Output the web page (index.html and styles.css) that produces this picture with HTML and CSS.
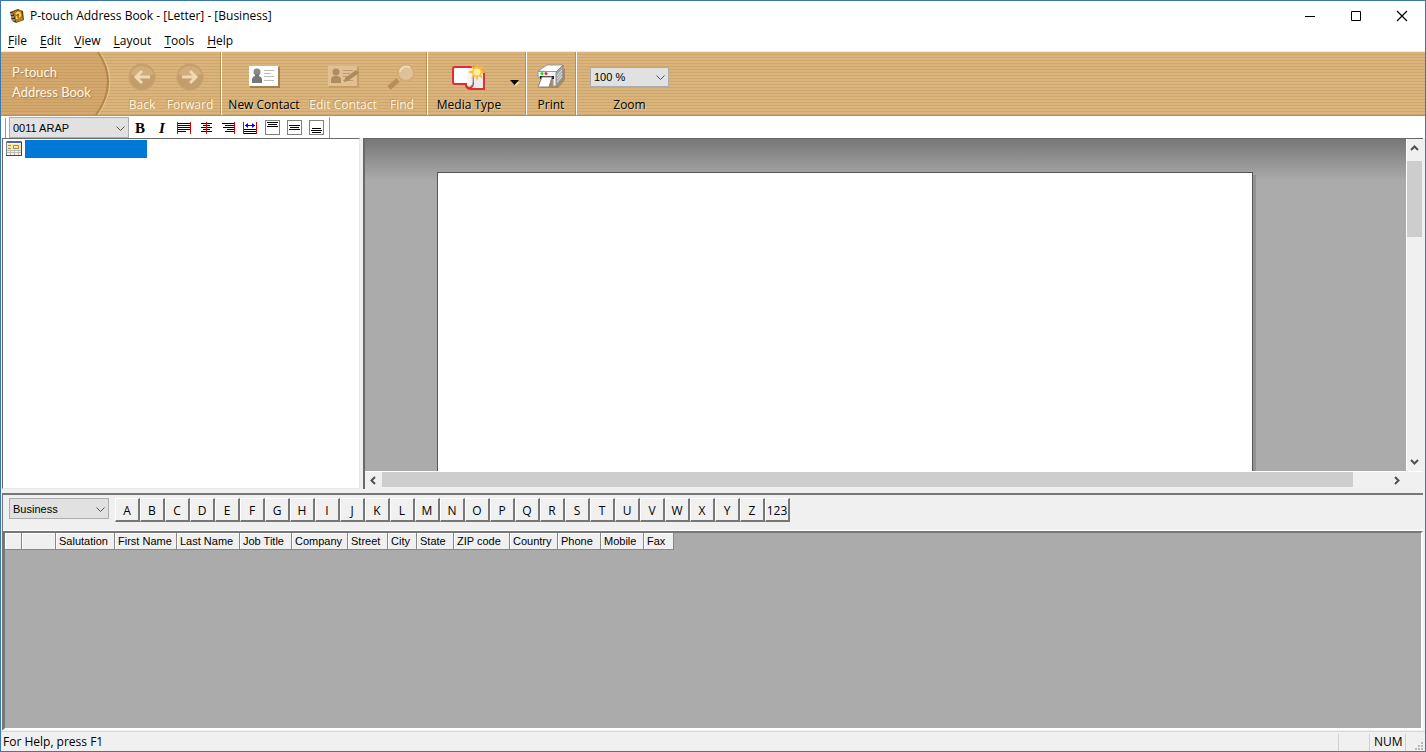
FILE: index.html
```
<!DOCTYPE html>
<html lang="en">
<head>
<meta charset="utf-8">
<title>P-touch Address Book - [Letter] - [Business]</title>
<link rel="stylesheet" href="styles.css">
</head>
<body>
<div class="window">
  <header class="titlebar">
    <svg class="app-icon" width="16" height="16" viewBox="0 0 16 16"><path d="M1 4 9 1l5 2 1 9-8 3-4-2z" fill="#6b4516"/><path d="m4 4 8-2 2 10-7 2z" fill="#b8801f"/><path d="m1 4 3 1 3 9-4-2z" fill="#3d2b16"/><path d="M1 6h3M2 9h3M3 12h3" stroke="#ddd"/><path d="M7 6q3-3 4 0t-3 3v2" fill="none" stroke="#f7d44c" stroke-width="2"/><path d="M9 6v4" stroke="#5c3a12"/></svg>
    <h1 class="title">P-touch Address Book - [Letter] - [Business]</h1>
    <div class="window-buttons">
      <button class="window-button" aria-label="Minimize"><svg width="12" height="12"><path d="M1 6.500h10" stroke="#000"/></svg></button>
      <button class="window-button" aria-label="Maximize"><svg width="12" height="12"><path d="M1.500 1.500h9v9h-9z" fill="none" stroke="#000"/></svg></button>
      <button class="window-button" aria-label="Close"><svg width="12" height="12"><path d="m1 1 10 10M11 1 1 11" stroke="#000" stroke-width="1.200"/></svg></button>
    </div>
  </header>
  <nav class="menubar">
    <button class="menu"><u>F</u>ile</button>
    <button class="menu"><u>E</u>dit</button>
    <button class="menu"><u>V</u>iew</button>
    <button class="menu"><u>L</u>ayout</button>
    <button class="menu"><u>T</u>ools</button>
    <button class="menu"><u>H</u>elp</button>
  </nav>
  <div class="toolbar">
    <div class="brand">
      <svg class="brand-arc" width="110" height="63" viewBox="0 0 110 63"><path d="M0 0h97q21 31-2 63H0z" fill="#c18a48" fill-opacity=".28"/><path d="M97 0q21 31-2 63" fill="none" stroke="#a87838" stroke-width="2" opacity=".7"/><path d="M99 0q21 31-2 63" fill="none" stroke="#ecd0a0" opacity=".7"/></svg>
      <span class="brand-text">P-touch<br>Address Book</span>
    </div>
    <div class="group group-nav">
      <button class="tool tool-nav" disabled><svg width="28" height="28"><circle cx="14" cy="14" r="13" fill="#c39d6a" stroke="#c7a26e"/><path d="M2 11a13 13 0 0 1 24 0q-12 5-24 0z" fill="#d7b484" opacity=".7"/><path d="M22 14H8m6-6-6 6 6 6" fill="none" stroke="#f0d8b1" stroke-width="3"/></svg><span>Back</span></button>
      <button class="tool tool-nav" disabled><svg width="28" height="28"><circle cx="14" cy="14" r="13" fill="#c39d6a" stroke="#c7a26e"/><path d="M2 11a13 13 0 0 1 24 0q-12 5-24 0z" fill="#d7b484" opacity=".7"/><path d="M6 14h14m-6-6 6 6-6 6" fill="none" stroke="#f0d8b1" stroke-width="3"/></svg><span>Forward</span></button>
    </div>
    <div class="group group-contact">
      <button class="tool tool-new"><svg width="32" height="28"><path d="M2 4h30v21H2z" fill="#876238" opacity=".6"/><path d="M1 3h29v20H1z" fill="#fff"/><path d="M4 20v-4q1-3 3-3h3q3 0 4 3v4z" fill="#777"/><circle cx="9" cy="9" r="3.500" fill="#888"/><path d="M7 11h4v3H7z" fill="#777"/><path d="M16 7.500h10M16 10.500h7M16 13.500h10M16 17.500h10" stroke="#bbb"/></svg><span>New Contact</span></button>
      <button class="tool tool-edit" disabled><svg width="32" height="28"><path d="M2 4h30v21H2z" fill="#c79d64"/><path d="M1 3h29v20H1z" fill="#e1c193"/><path d="M4 20v-4q1-3 3-3h3q3 0 4 3v4z" fill="#b08c60"/><circle cx="9" cy="9" r="3.500" fill="#b08c60"/><path d="M16 7.500h10M16 10.500h7M16 13.500h10M16 17.500h10" stroke="#c09b6b"/><path d="m17 19 1-4 11-8 3 3-11 8z" fill="#b08a5c"/></svg><span>Edit Contact</span></button>
      <button class="tool tool-find" disabled><svg width="28" height="28"><path d="m1 25 9-8" stroke="#b98c5c" stroke-width="5"/><circle cx="18" cy="10" r="8" fill="#dfc29a" stroke="#d2ac76" stroke-width="2"/><path d="M12 9a6 6 0 0 1 10-4" fill="none" stroke="#edd8b8" stroke-width="2"/></svg><span>Find</span></button>
    </div>
    <div class="group group-media">
      <button class="tool tool-media"><svg width="36" height="28"><path d="M19 9h14v17H20q-4 0-5-3z" fill="#f1eaea" stroke="#d83338" stroke-width="2"/><path d="M4 4h18v17q-1 4-4 4-3-1-3-4H4q-2 0-2-2V6q0-2 2-2z" fill="#fff" stroke="#e02c33" stroke-width="2"/><path d="M16 21q1 4 4 2 3-2 2-12v-6h-5z" fill="#f6f2f2"/><path d="M22 12v8q-1 4-4 4" fill="none" stroke="#999"/><path d="m26 0 1.500 5L32 2l-2 5 5 2-5 2 2 5-4.500-3L26 18l-1.500-5-4.500 3 2-5-5-2 5-2-2-5 4.500 3z" fill="#ffbb35"/><circle cx="26" cy="9" r="3.500" fill="#fff296"/></svg><span>Media Type</span></button>
      <button class="drop" aria-label="Media type options"><svg width="10" height="6"><path d="M2 2h8L6 6z" fill="#f2dcb8"/><path d="M0 0h9L4.500 5z"/></svg></button>
    </div>
    <div class="group group-print">
      <button class="tool tool-print"><svg width="30" height="28"><path d="m4 25 18 0 7-8V5z" fill="#6f5430" opacity=".4"/><path d="m2 8 9-6h16l-6 7z" fill="#fff" stroke="#999"/><path d="m20 9 7-7v13l-7 9z" fill="#a5a5a5" stroke="#888"/><path d="m21 13 5-6m-5 9 5-6m-5 9 5-6" stroke="#e8e8e8"/><path d="M2 8.500h18V23h-3v-9H2z" fill="#f4f4f4" stroke="#999"/><path d="M4 13h14v3H4z" fill="#222"/><path d="M6 14h10l-3 10H2z" fill="#fff" stroke="#888"/><circle cx="6" cy="10.500" r="1.500" fill="#17d636"/><circle cx="10" cy="10.500" r="1.500" fill="#e52936"/></svg><span>Print</span></button>
    </div>
    <div class="zoom">
      <div class="combo combo-zoom"><select id="zoom"><option>100 %</option></select><svg class="chevron" width="9" height="6"><path d="m.5.500 4 4 4-4" fill="none" stroke="#555"/></svg></div>
      <label for="zoom">Zoom</label>
    </div>
  </div>
  <div class="formatbar">
    <span class="grip"></span>
    <div class="combo combo-font"><select aria-label="Font"><option>0011 ARAP</option></select><svg class="chevron" width="9" height="6"><path d="m.5.500 4 4 4-4" fill="none" stroke="#555"/></svg></div>
    <button class="format bold" aria-label="Bold">B</button>
    <button class="format italic" aria-label="Italic">I</button>
    <button class="format" aria-label="Align left"><svg width="14" height="14"><path d="M1 2.500h12M1 4.500h12M1 6.500h12M1 8.500h12M1 10.500h8" stroke="#000"/><path d="M.5 1v12M13.500 1v12" stroke="#d00000"/></svg></button>
    <button class="format" aria-label="Align center"><svg width="14" height="14"><path d="M2 2.500h11M4 4.500h7M2 6.500h11M4 8.500h7M2 10.500h11" stroke="#000"/><path d="M7.500 1v12" stroke="#d00000"/></svg></button>
    <button class="format" aria-label="Align right"><svg width="14" height="14"><path d="M1 2.500h12M4 4.500h9M2 6.500h11M6 8.500h7M4 10.500h9" stroke="#000"/><path d="M13.500 1v12" stroke="#d00000"/></svg></button>
    <button class="format" aria-label="Justify"><svg width="14" height="14"><path d="M1 8.500h12M1 10.500h12M1 12.500h12" stroke="#000"/><path d="M.5 1v12M13.500 1v12" stroke="#d00000"/><path d="M2 4.500h10" stroke="#00e"/><path d="m5 2-3 2.500L5 7zm4 0 3 2.500L9 7z" fill="#00e"/></svg></button>
    <button class="format" aria-label="Align top"><svg width="15" height="15"><path d="M.5.500h14v14H.5z" fill="none" stroke="#000" stroke-dasharray="1 1"/><path d="M2 2.500h11M3 4.500h9M2 6.500h11" stroke="#000"/></svg></button>
    <button class="format" aria-label="Align middle"><svg width="15" height="15"><path d="M.5.500h14v14H.5z" fill="none" stroke="#000" stroke-dasharray="1 1"/><path d="M2 5.500h11M3 7.500h9M2 9.500h11" stroke="#000"/></svg></button>
    <button class="format" aria-label="Align bottom"><svg width="15" height="15"><path d="M.5.500h14v14H.5z" fill="none" stroke="#000" stroke-dasharray="1 1"/><path d="M3 8.500h9M2 10.500h11M3 12.500h9" stroke="#000"/></svg></button>
    <span class="bar-end"></span>
  </div>
  <main class="panes">
    <section class="tree" aria-label="Layouts">
      <svg width="16" height="16"><path d="M.5 1.500h15v14H.5z" fill="#f4f4ee" stroke="#888"/><path d="M1 1h14v2H1z" fill="#4a66a8"/><path d="M1 4h14v6H1z" fill="#f5e9ab"/><path d="M2 5.500h3M2 8.500h3M7.500 5.500h5v3h-5z" fill="none" stroke="#a58b48"/><path d="M1 10.500h14M1 12.500h14M4.500 10v5M8.500 10v5M12.500 10v5" stroke="#bbb"/><path d="M0 15.500h16M15.500 2v14" stroke="#444"/></svg>
      <span class="tree-selection"></span>
    </section>
    <section class="preview" aria-label="Label preview">
      <div class="canvas"><div class="paper"></div></div>
      <div class="scroll-v">
        <button class="scroll-button" aria-label="Scroll up"><svg width="9" height="7"><path d="m1 5 3.500-3.500L8 5" fill="none" stroke="#505050" stroke-width="2"/></svg></button>
        <div class="track-v"><div class="thumb-v"></div></div>
        <button class="scroll-button" aria-label="Scroll down"><svg width="9" height="7"><path d="m1 1 3.500 3.500L8 1" fill="none" stroke="#505050" stroke-width="2"/></svg></button>
      </div>
      <div class="scroll-h">
        <button class="scroll-button" aria-label="Scroll left"><svg width="7" height="9"><path d="M5 1 1.500 4.500 5 8" fill="none" stroke="#505050" stroke-width="2"/></svg></button>
        <div class="track-h"><div class="thumb-h"></div></div>
        <button class="scroll-button" aria-label="Scroll right"><svg width="7" height="9"><path d="m1 1 3.500 3.500L1 8" fill="none" stroke="#505050" stroke-width="2"/></svg></button>
      </div>
    </section>
  </main>
  <section class="contacts">
    <div class="filter">
      <div class="combo combo-book"><select aria-label="Address book"><option>Business</option></select><svg class="chevron" width="9" height="6"><path d="m.5.500 4 4 4-4" fill="none" stroke="#555"/></svg></div>
      <div class="letters">
        <button>A</button><button>B</button><button>C</button><button>D</button><button>E</button><button>F</button><button>G</button><button>H</button><button>I</button><button>J</button><button>K</button><button>L</button><button>M</button><button>N</button><button>O</button><button>P</button><button>Q</button><button>R</button><button>S</button><button>T</button><button>U</button><button>V</button><button>W</button><button>X</button><button>Y</button><button>Z</button><button>123</button>
      </div>
    </div>
    <div class="records">
      <table class="grid">
        <colgroup><col class="c17"><col class="c34"><col class="c59"><col class="c62"><col class="c63"><col class="c52"><col class="c56"><col class="c40"><col class="c29"><col class="c37"><col class="c56"><col class="c48"><col class="c43"><col class="c43"><col class="c30"></colgroup>
        <thead><tr><th></th><th></th><th>Salutation</th><th>First Name</th><th>Last Name</th><th>Job Title</th><th>Company</th><th>Street</th><th>City</th><th>State</th><th>ZIP code</th><th>Country</th><th>Phone</th><th>Mobile</th><th>Fax</th></tr></thead>
      </table>
    </div>
  </section>
  <footer class="status">
    <span class="status-text">For Help, press F1</span>
    <span class="status-cell"></span>
    <span class="status-cell">NUM</span>
    <span class="status-cell status-grip"><svg width="9" height="9"><path d="M6 0h2v2H6zM3 3h2v2H3zM6 3h2v2H6zM0 6h2v2H0zM3 6h2v2H3zM6 6h2v2H6z" fill="#b9b9b9"/></svg></span>
  </footer>
</div>
</body>
</html>
```
FILE: styles.css
```
* { box-sizing: border-box; }
body { margin: 0; font: 12px/16px "Open Sans", "Noto Sans", sans-serif; color: #000; }
button { margin: 0; padding: 0; border: 0; background: none; font: inherit; color: inherit; }
svg { display: block; flex: none; }
.window { height: 100vh; display: flex; flex-direction: column; border: 1px solid #3b78ad; background: #f0f0f0; overflow: hidden; }
.titlebar { height: 30px; flex: none; display: flex; align-items: center; padding-left: 8px; background: #fff; }
.title { margin: 0 auto 0 5px; font-size: 12px; font-weight: 400; }
.window-buttons { display: flex; }
.window-button { width: 46px; height: 28px; display: grid; place-items: center; }
.menubar { height: 21px; flex: none; display: flex; gap: 13px; padding: 0 7px; background: #fff; border-bottom: 1px solid #f0e9df; }
.menu u { text-underline-offset: 2px; }

.toolbar { height: 64px; flex: none; display: flex; background: repeating-linear-gradient(#d9b47d 0 2px, #cfa66c 2px 3px); border-bottom: 1px solid #ad9070; }
.brand { width: 110px; position: relative; color: #fff8e8; font: 13px/20px Lato, sans-serif; text-shadow: 1px 1px 1px #a87b42; }
.brand-arc { position: absolute; inset: 0; }
.brand-text { position: relative; display: block; padding: 10px 0 0 11px; white-space: nowrap; }
.group { display: flex; border-right: 1px solid #fff; box-shadow: inset -1px 0 #b98e58; }
.group-nav { width: 111px; padding-left: 7px; }
.group-contact { width: 206px; padding-left: 2px; }
.group-media { width: 99px; padding-left: 6px; }
.group-print { width: 50px; padding-left: 4px; }
.tool { display: flex; flex-direction: column; align-items: center; justify-content: space-between; padding: 11px 0 2px; white-space: nowrap; text-shadow: 1px 1px #e9cda0; }
.tool:disabled { color: #fff3dc; text-shadow: -1px -1px #bf965e; }
.tool-nav { width: 48px; }
.tool-new { width: 80px; }
.tool-edit { width: 78px; }
.tool-find { width: 40px; }
.tool-media { width: 70px; }
.tool-print { width: 40px; }
.drop { width: 21px; display: grid; place-items: center; padding-bottom: 2px; }
.zoom { display: flex; flex-direction: column; align-items: center; justify-content: space-between; padding: 15px 0 2px 13px; }
.zoom label { text-shadow: 1px 1px #e9cda0; }
.combo { position: relative; flex: none; }
.combo select { width: 100%; height: 100%; appearance: none; border: 1px solid #adadad; border-radius: 0; background: #e1e1e1; padding: 0 3px; font: 11px/16px "Liberation Sans", sans-serif; color: #000; }
.chevron { position: absolute; right: 4px; top: 50%; margin-top: -2px; pointer-events: none; }
.combo-zoom { width: 79px; height: 20px; }
.combo-font { width: 120px; height: 21px; }
.combo-book { width: 100px; height: 21px; }

.formatbar { height: 22px; flex: none; display: flex; align-items: center; padding: 1px 0 0 4px; background: #fff; }
.grip { width: 4px; height: 20px; border-left: 1px solid #999; }
.format { width: 22px; height: 21px; display: grid; place-items: center; }
.bold { font: 700 15px/20px "Liberation Serif", serif; }
.italic { font: italic 700 15px/20px "Liberation Serif", serif; }
.bar-end { width: 1px; height: 21px; margin-left: 2px; background: #999; }

.panes { height: 351px; flex: none; display: flex; gap: 3px; padding: 0 2px 0 1px; }
.tree { width: 358px; flex: none; display: flex; gap: 3px; padding: 1px 3px; background: #fff; border: 1px solid; border-color: #696969 #e8e8e8 #e8e8e8 #696969; }
.tree-selection { width: 122px; height: 18px; background: #0078d7; }
.preview { flex: 1; min-width: 0; display: grid; grid-template: minmax(0, 1fr) 18px / minmax(0, 1fr) 17px; border: solid #696969; border-width: 1px 0 0 2px; }
.canvas { padding: 33px 153px 0 72px; background: linear-gradient(#777, #ababab 42px); overflow: hidden; }
.paper { height: 100%; background: #fff; border: 1px solid #555; border-bottom: 0; box-shadow: 3px 3px #929292; }
.scroll-v { display: flex; flex-direction: column; padding-top: 1px; border-left: 1px solid #fff; }
.scroll-h { display: flex; grid-column: span 2; padding-right: 17px; border-top: 1px solid #fff; }
.scroll-button { width: 17px; height: 17px; flex: none; display: grid; place-items: center; }
.track-v, .track-h { flex: 1; }
.track-v { padding-top: 4px; }
.thumb-v { width: 15px; height: 76px; background: #cdcdcd; }
.scroll-v .scroll-button { width: 15px; }
.track-h { padding-right: 36px; }
.thumb-h { height: 15px; background: #cdcdcd; }

.contacts { flex: 1; min-height: 0; display: flex; flex-direction: column; margin: 4px 2px 0 1px; border: solid #777; border-width: 2px 0 0 1px; }
.filter { height: 36px; flex: none; display: flex; gap: 6px; padding: 3px 6px; border-bottom: 1px solid #fff; }
.letters { display: flex; }
.letters button { width: 25px; height: 24px; padding-top: 3px; border: solid; border-width: 1px 2px 2px 1px; border-color: #fff #777 #777 #fff; }
.records { flex: 1; min-height: 0; background: #ababab; border: solid; border-width: 2px; border-color: #777 #fff #fff #777; }
.grid { width: 669px; table-layout: fixed; border-collapse: separate; border-spacing: 0; background: #f0f0f0; font: 11px/16px "Liberation Sans", sans-serif; }
.grid th { height: 17px; padding: 0 0 0 3px; border: solid; border-width: 0 1px 1px 0; border-color: #888; text-align: left; font-weight: 400; white-space: nowrap; box-shadow: inset 1px 1px #fff; }
.c17 { width: 17px; } .c29 { width: 29px; } .c30 { width: 30px; } .c34 { width: 34px; } .c37 { width: 37px; }
.c40 { width: 40px; } .c43 { width: 43px; } .c48 { width: 48px; } .c52 { width: 52px; } .c56 { width: 56px; }
.c59 { width: 59px; } .c62 { width: 62px; } .c63 { width: 63px; }

.status { height: 20px; flex: none; display: flex; align-items: center; margin-top: 1px; border-top: 1px solid #d7d7d7; padding: 1px 0 0 2px; }
.status-text { flex: 1; }
.status-cell { width: 31px; height: 17px; padding-left: 4px; border-left: 1px solid #d0d0d0; }
.status-cell:nth-child(3) { width: 36px; }
.status-grip { width: 20px; padding: 8px 0 0 9px; }
```
